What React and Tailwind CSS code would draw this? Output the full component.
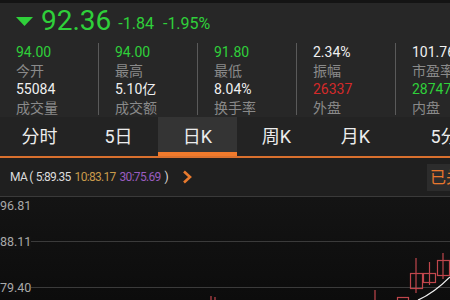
import React from 'react';

const green = 'text-[#2fd03a]';

const stats = [
  [
    { v: '94.00', c: green, l: '今开' },
    { v: '55084', c: 'text-[#f0f0f0]', l: '成交量' },
  ],
  [
    { v: '94.00', c: green, l: '最高' },
    { v: '5.10亿', c: 'text-[#f0f0f0]', l: '成交额' },
  ],
  [
    { v: '91.80', c: green, l: '最低' },
    { v: '8.04%', c: 'text-[#f0f0f0]', l: '换手率' },
  ],
  [
    { v: '2.34%', c: 'text-[#f0f0f0]', l: '振幅' },
    { v: '26337', c: 'text-[#d42a2a]', l: '外盘' },
  ],
  [
    { v: '101.76', c: 'text-[#f0f0f0]', l: '市盈率' },
    { v: '28747', c: green, l: '内盘' },
  ],
];

const tabs = ['分时', '5日', '日K', '周K', '月K', '5分'];

function Candles() {
  return (
    <svg className="absolute left-0 top-0" width="450" height="103" viewBox="0 0 450 103">
      <g stroke="#c0464c" strokeWidth="1.2" fill="none">
        <line x1="211" y1="99" x2="211" y2="103" />
        <line x1="215" y1="100" x2="215" y2="103" />
        <line x1="375" y1="93" x2="375" y2="103" />
        <rect x="397.5" y="100.5" width="11" height="4" />
        <line x1="416" y1="61" x2="416" y2="96" />
        <rect x="410.5" y="76.5" width="12" height="15" />
        <line x1="429.5" y1="65" x2="429.5" y2="88" />
        <rect x="423.5" y="76.5" width="12" height="9" />
        <line x1="443" y1="56" x2="443" y2="82" />
        <rect x="437.5" y="63.5" width="12" height="15" />
      </g>
      <path d="M418 103 C 430 98, 440 90, 450 80" stroke="#f2f2f2" strokeWidth="1.2" fill="none" />
    </svg>
  );
}

export default function App() {
  return (
    <div className="w-[450px] h-[300px] overflow-hidden bg-[#0e0e0e] font-['Roboto','Noto_Sans_CJK_SC',sans-serif]">
      <div className="h-[3px] bg-[#141414]" />
      {/* quote header */}
      <div className="bg-[#272727] h-[114px] flex flex-col">
        <div className="flex items-end h-[34px] pl-[16px]">
          <svg width="17" height="9" viewBox="0 0 17 9" className="mb-[11px]">
            <polygon points="0,0 17,0 8.5,9" fill="#2fd03a" />
          </svg>
          <span className={`ml-[8px] text-[28px] leading-none ${green} mb-[2px]`}>92.36</span>
          <span className={`ml-[7px] text-[16px] leading-none ${green} mb-[5px]`}>-1.84</span>
          <span className={`ml-[9px] text-[16px] leading-none ${green} mb-[5px]`}>-1.95%</span>
        </div>
        <div className="flex mt-[5px]">
          {stats.map((col, i) => (
            <div
              key={i}
              className={`w-[99px] shrink-0 pl-[16px] ${i < 4 ? 'border-r border-[#5a5a5a]' : ''} h-[72px] flex flex-col text-[14px] leading-[18.5px] mt-[1px]`}
            >
              {col.map((r, j) => (
                <React.Fragment key={j}>
                  <span className={`${r.c} whitespace-nowrap`}>{r.v}</span>
                  <span className="text-[#8a8a8a] whitespace-nowrap">{r.l}</span>
                </React.Fragment>
              ))}
            </div>
          ))}
        </div>
      </div>
      {/* tabs */}
      <div className="bg-[#232323] h-[41px] flex border-b-[2px] border-[#d9702e]">
        {tabs.map((t, i) => (
          <div
            key={t}
            className={`w-[79px] shrink-0 flex items-center justify-center text-[18px] text-[#ececec] ${
              i === 2 ? 'bg-[#343434] border-b-[4px] border-[#f07a2c] pt-[4px]' : ''
            } ${i === 5 ? 'pl-[20px]' : ''}`}
          >
            {t}
          </div>
        ))}
      </div>
      {/* MA row */}
      <div className="bg-[#1f1f1f] h-[39px] flex items-center border-b border-[#3a3a3a] relative text-[12px] tracking-[-0.7px] whitespace-nowrap">
        <span className="ml-[10px] text-[#dcdcdc]">MA (</span>
        <span className="ml-[3px] text-[#dcdcdc]">5:89.35</span>
        <span className="ml-[4px] text-[#c99a4b]">10:83.17</span>
        <span className="ml-[4px] text-[#9a5cc0]">30:75.69</span>
        <span className="ml-[4px] text-[#dcdcdc]">)</span>
        <svg width="10" height="14" viewBox="0 0 10 14" className="ml-[14px]">
          <polyline points="2,1.5 8,7 2,12.5" stroke="#e87a2e" strokeWidth="2.6" fill="none" />
        </svg>
        <div className="absolute left-[427px] top-[6px] w-[40px] h-[27px] bg-[#2c2c2c] flex items-center pl-[3px] text-[16px] tracking-normal text-[#e8772e]">
          已关
        </div>
      </div>
      {/* chart */}
      <div className="relative h-[103px] bg-gradient-to-b from-[#141414] to-[#0c0c0c]">
        <div className="h-[45px] border-b border-[#3b3b3b]" />
        <div className="h-[46px] border-b border-[#3b3b3b]" />
        <span className="absolute left-0 top-[3px] text-[12.5px] leading-none text-[#a9a9a9]">96.81</span>
        <span className="absolute left-0 top-[39px] text-[12.5px] leading-none text-[#a9a9a9] bg-[#121212]">88.11</span>
        <span className="absolute left-0 top-[85px] text-[12.5px] leading-none text-[#a9a9a9] bg-[#0e0e0e]">79.40</span>
        <Candles />
      </div>
    </div>
  );
}
